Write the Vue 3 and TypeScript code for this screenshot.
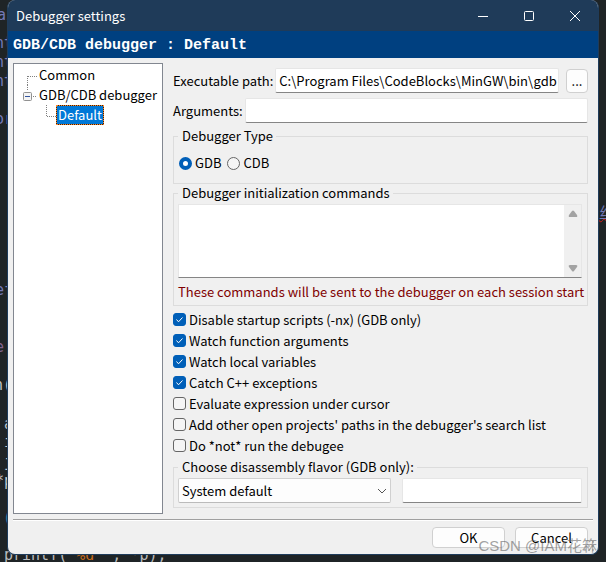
<script setup lang="ts">
import { ref } from 'vue'

interface CodeBit { text: string; x: number; y: number; tone: string }
interface Option { id: string; label: string; on: boolean }

const code: CodeBit[] = [
  { text: 'ai', x: -3, y: 5, tone: 'violet' },
  { text: 'nt', x: -5, y: 33, tone: 'violet' },
  { text: 'nt', x: -5, y: 52, tone: 'violet' },
  { text: 'nt', x: -5, y: 71, tone: 'violet' },
  { text: 'or', x: -5, y: 109, tone: 'violet' },
  { text: 'ef', x: -5, y: 280, tone: 'violet' },
  { text: 'e', x: -5, y: 337, tone: 'plum' },
  { text: 'n(', x: -6, y: 375, tone: 'pale' },
  { text: 'a', x: 4, y: 414, tone: 'pale' },
  { text: 'i', x: 4, y: 432, tone: 'pale' },
  { text: 'j', x: 4, y: 452, tone: 'pale' },
  { text: '*p', x: -5, y: 471, tone: 'pale' },
  { text: '(', x: 3, y: 508, tone: 'cyan' },
]

const path = ref('C:\\Program Files\\CodeBlocks\\MinGW\\bin\\gdb.exe')
const args = ref('')
const kind = ref('GDB')
const commands = ref('')
const flavor = ref('System default')
const customFlavor = ref('')
const options = ref<Option[]>([
  { id: 'nx', label: 'Disable startup scripts (-nx) (GDB only)', on: true },
  { id: 'args', label: 'Watch function arguments', on: true },
  { id: 'locals', label: 'Watch local variables', on: true },
  { id: 'catch', label: 'Catch C++ exceptions', on: true },
  { id: 'eval', label: 'Evaluate expression under cursor', on: false },
  { id: 'paths', label: "Add other open projects' paths in the debugger's search list", on: false },
  { id: 'norun', label: 'Do *not* run the debugee', on: false },
])
</script>

<template>
  <div class="desktop">
    <div class="editor" aria-hidden="true">
      <span v-for="c in code" :key="c.y" class="bit" :class="c.tone" :style="{ left: c.x + 'px', top: c.y + 'px' }">{{ c.text }}</span>
      <span class="bit print">printf("<b>%d</b>&nbsp;", *p);</span>
      <span class="han">丝</span>
    </div>

    <main class="dialog">
      <header class="titlebar">
        <h1>Debugger settings</h1>
        <button type="button" aria-label="Minimize"><svg width="12" height="12" viewBox="0 0 12 12"><path d="M1 6.5h10" /></svg></button>
        <button type="button" aria-label="Maximize"><svg width="12" height="12" viewBox="0 0 12 12"><rect x="1.5" y="1.5" width="9" height="9" rx="1" /></svg></button>
        <button type="button" aria-label="Close"><svg width="12" height="12" viewBox="0 0 12 12"><path d="M1 1l10 10M11 1L1 11" /></svg></button>
      </header>
      <h2 class="banner">GDB/CDB debugger : Default</h2>

      <div class="body">
        <nav class="tree">
          <ul>
            <li class="row"><svg width="24" height="20" viewBox="0 0 24 20"><path class="dots" d="M13.5 11v9M14 11.5h9" /></svg><a href="#common">Common</a></li>
            <li class="row">
              <svg width="24" height="20" viewBox="0 0 24 20"><path class="dots" d="M13.5 0v6M19 11.5h4" /><rect class="box" x="9.5" y="7.5" width="8" height="8" rx="1" /><path class="minus" d="M11 11.5h5" /></svg>
              <a href="#gdb">GDB/CDB debugger</a>
            </li>
            <li class="row child"><svg width="24" height="20" viewBox="0 0 24 20"><path class="dots" d="M13.5 0v11M14 11.5h9" /></svg><a href="#default" class="selected">Default</a></li>
          </ul>
        </nav>

        <form class="panel" @submit.prevent>
          <div class="field">
            <label for="exe">Executable path:</label>
            <input id="exe" v-model="path" class="text" type="text">
            <button type="button" class="btn browse" aria-label="Browse">...</button>
          </div>
          <div class="field">
            <label for="arguments">Arguments:</label>
            <input id="arguments" v-model="args" class="text" type="text">
          </div>

          <fieldset class="kind">
            <legend>Debugger Type</legend>
            <div class="radios">
              <label><input v-model="kind" type="radio" name="kind" value="GDB">GDB</label>
              <label><input v-model="kind" type="radio" name="kind" value="CDB">CDB</label>
            </div>
          </fieldset>

          <fieldset>
            <legend><label for="init">Debugger initialization commands</label></legend>
            <div class="area">
              <textarea id="init" v-model="commands"></textarea>
              <div class="scroll">
                <button type="button" aria-label="Scroll up"><svg width="10" height="8" viewBox="0 0 10 8"><path d="M4 1Q5 0 6 1L9 5Q10 7 8 7H2Q0 7 1 5Z" /></svg></button>
                <button type="button" aria-label="Scroll down"><svg width="10" height="8" viewBox="0 0 10 8"><path d="M4 7Q5 8 6 7L9 3Q10 1 8 1H2Q0 1 1 3Z" /></svg></button>
              </div>
            </div>
            <p class="note">These commands will be sent to the debugger on each session start</p>
          </fieldset>

          <div class="checks">
            <label v-for="o in options" :key="o.id"><input v-model="o.on" type="checkbox"><svg class="tick" width="13" height="13" viewBox="0 0 13 13"><path d="M3.5 6.500l2 2.300l4-4.300" /></svg>{{ o.label }}</label>
          </div>

          <fieldset>
            <legend>Choose disassembly flavor (GDB only):</legend>
            <div class="pair">
              <div class="combo">
                <select v-model="flavor" aria-label="Disassembly flavor">
                  <option>System default</option>
                </select>
                <svg width="10" height="6" viewBox="0 0 10 6"><path d="M1 1l4 4l4-4" /></svg>
              </div>
              <input v-model="customFlavor" class="text" type="text" aria-label="Custom flavor">
            </div>
          </fieldset>
        </form>
      </div>

      <footer class="actions">
        <button type="button" class="btn">OK</button>
        <button type="button" class="btn">Cancel</button>
      </footer>
      <svg class="grip" width="11" height="11" viewBox="0 0 11 11"><path d="M8 0h2v2H8zM4 4h2v2H4zM8 4h2v2H8zM0 8h2v2H0zM4 8h2v2H4zM8 8h2v2H8z" /></svg>
    </main>
    <div class="watermark">CSDN @IAM花箖</div>
  </div>
</template>

<style>
body { background: #1f2426; }
</style>

<style scoped>
* { box-sizing: border-box; }
.desktop {
  position: relative;
  min-height: 100vh;
  padding: 0 7px 7px;
  overflow: hidden;
  background: #1f2426;
  color: #000;
  font: 13px/18px "Noto Sans CJK SC", "Noto Sans", sans-serif;
}
button, input, select, textarea { font: inherit; color: inherit; margin: 0; }
.editor { position: absolute; inset: 0; font: 15px/20px "DejaVu Sans Mono", monospace; }
.bit { position: absolute; white-space: pre; }
.violet { color: #7479b8; }
.plum { color: #82648f; }
.pale { color: #c3c5c9; }
.cyan { color: #2b86a0; }
.print { left: 4px; bottom: -3px; color: #b9bbbe; }
.print b { color: #c26a1c; font-weight: 400; }
.han { position: absolute; left: 599px; top: 202px; color: #7479b8; font-family: "Noto Sans CJK SC", sans-serif; text-decoration: underline wavy #d01818 1px; text-underline-offset: 0; }

.dialog {
  position: relative;
  border: 1px solid #1f3c5b;
  border-top: 0;
  border-radius: 8px;
  background: #f0f0f0;
  overflow: hidden;
}
.titlebar { display: flex; height: 31px; background: #1f3b59; color: #fff; align-items: center; }
h1 { flex: 1; margin: 0; padding-left: 8px; font-size: 13px; font-weight: 400; }
.titlebar button { width: 46px; height: 31px; padding: 0; border: 0; background: none; display: grid; place-items: center; }
.titlebar svg { fill: none; stroke: #fff; }
.banner { margin: 0; height: 27px; padding: 1px 0 0 5px; background: #004080; color: #fff; font: bold 15px/27px "Liberation Mono", monospace; }
.body { display: flex; gap: 10px; padding: 5px 10px 5px 5px; }
.tree { flex: 0 0 150px; border: 1px solid #828790; background: #fff; }
ul { list-style: none; margin: 0; padding: 1px 0 0; }
.row { display: flex; height: 20px; align-items: center; }
.row.child { padding-left: 19px; }
.row a { padding: 0 1px; color: #000; text-decoration: none; white-space: nowrap; }
.row a.selected { background: #0078d7; color: #fff; box-shadow: 0 0 0 1px #3a2410; outline: 1px dotted #ff8728; }
.dots { stroke: #808080; stroke-dasharray: 1 1; fill: none; }
.box { fill: #f4f4f4; stroke: #919191; }
.minus { stroke: #33559f; }

.panel { flex: 1; min-width: 0; padding-bottom: 6px; }
.field { display: flex; align-items: center; gap: 2px; padding-top: 5px; }
.text { flex: 1; min-width: 0; height: 25px; padding: 0 1px 0 3px; border: 1px solid #e6e6e6; border-bottom-color: #858585; border-radius: 2px; background: #fff; outline: 0; }
.btn { padding: 0; border: 1px solid #d0d0d0; border-radius: 4px; background: #fdfdfd; }
.browse { width: 22px; height: 24px; margin-left: 5px; }
fieldset { min-width: 0; margin: 0; padding: 2px 5px 4px 4px; border: 1px solid #dcdcdc; }
legend { padding: 0 3px 0 4px; }
.kind { margin-top: 4px; }
.radios { display: flex; gap: 6px; padding: 7px 0 7px 1px; }
.radios label, .checks label { display: flex; align-items: center; gap: 3px; }
.radios input { appearance: none; width: 13px; height: 13px; border: 1px solid #666; border-radius: 50%; background: #f5f5f5; }
.radios input:checked { border: 4px solid #005fb8; background: #fff; }
.area { display: flex; height: 74px; border: 1px solid #e6e6e6; border-bottom-color: #858585; background: #fff; }
textarea { flex: 1; min-width: 0; border: 0; padding: 2px; resize: none; background: #fff; outline: 0; }
.scroll { width: 17px; background: #f0f0f0; display: flex; flex-direction: column; justify-content: space-between; }
.scroll button { height: 18px; padding: 0; border: 0; background: none; display: grid; place-items: center; }
.scroll svg { fill: #a3a3a3; }
.note { margin: 5px 0 0; color: #800000; white-space: nowrap; }
.checks { padding: 3px 0 2px; }
.checks label { position: relative; height: 21px; }
.checks input { appearance: none; width: 13px; height: 13px; border: 1px solid #666; border-radius: 3px; background: #f5f5f5; }
.checks input:checked { border-color: #005fb8; background: #005fb8; }
.tick { position: absolute; left: 0; top: 4px; fill: none; stroke: transparent; pointer-events: none; }
input:checked + .tick { stroke: #fff; }
.pair { display: flex; gap: 11px; }
.combo { position: relative; flex: 0 1 213px; }
.combo select { appearance: none; display: block; width: 100%; height: 25px; padding: 0 3px; border: 1px solid #d0d0d0; border-bottom-color: #bbb; border-radius: 2px; background: #fdfdfd; }
.combo svg { position: absolute; right: 4px; top: 10px; fill: none; stroke: #555; pointer-events: none; }
.actions { display: flex; justify-content: flex-end; gap: 10px; margin: 0 5px; padding: 7px 5px 6px; border-top: 1px solid #a0a0a0; box-shadow: inset 0 1px #fff; }
.actions .btn { width: 73px; height: 21px; }
.grip { position: absolute; right: 3px; bottom: 2px; fill: #c2c2c2; }
.watermark { position: absolute; right: 9px; bottom: 7px; color: rgba(100, 100, 100, .6); font: 15px/18px "Liberation Sans", "Noto Sans CJK SC", sans-serif; pointer-events: none; }
</style>
